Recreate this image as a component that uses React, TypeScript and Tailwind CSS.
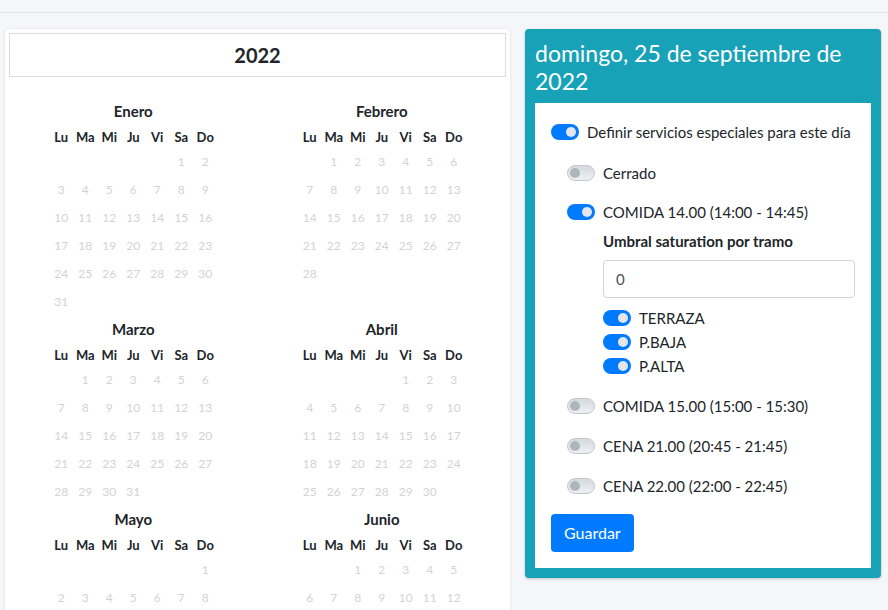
import React from "react"

const MONTHS = [
  "Enero", "Febrero", "Marzo", "Abril", "Mayo", "Junio",
  "Julio", "Agosto", "Septiembre", "Octubre", "Noviembre", "Diciembre",
]
const DAYS = ["Lu", "Ma", "Mi", "Ju", "Vi", "Sa", "Do"]

function monthWeeks(year: number, month: number) {
  const offset = (new Date(year, month, 1).getDay() + 6) % 7
  const total = new Date(year, month + 1, 0).getDate()
  const cells: (number | null)[] = Array(offset).fill(null)
  for (let d = 1; d <= total; d++) cells.push(d)
  while (cells.length % 7) cells.push(null)
  const weeks: (number | null)[][] = []
  for (let i = 0; i < cells.length; i += 7) weeks.push(cells.slice(i, i + 7))
  return weeks
}

function Month({ year, month }: { year: number; month: number }) {
  const weeks = monthWeeks(year, month)
  return (
    <div className="flex flex-col items-center">
      <div className="h-[22px] leading-[22px] mb-[4px] text-[15px] font-bold text-[#212529]">{MONTHS[month]}</div>
      <div className="grid grid-cols-[repeat(7,24px)]">
        {DAYS.map((d) => (
          <div key={d} className="h-[22px] leading-[22px] text-center text-[13px] font-bold text-[#212529]">
            {d}
          </div>
        ))}
        {weeks.flat().map((d, i) => (
          <div key={i} className="h-[28px] leading-[28px] text-center text-[12px] text-[#d3d3d3]">
            {d ?? ""}
          </div>
        ))}
      </div>
    </div>
  )
}

function Switch({ on }: { on: boolean }) {
  return on ? (
    <span className="relative inline-block w-[28px] h-[16px] rounded-full bg-[#007bff] shrink-0">
      <span className="absolute right-[3px] top-[3px] w-[10px] h-[10px] rounded-full bg-[#e3e6ec]" />
    </span>
  ) : (
    <span className="relative inline-block w-[28px] h-[16px] rounded-full border border-[#c4c8cd] bg-gradient-to-b from-[#d6d9dd] to-[#eef0f2] shrink-0">
      <span className="absolute left-[2px] top-[2px] w-[10px] h-[10px] rounded-full bg-[#adb5bd]" />
    </span>
  )
}

function Row({ on, label }: { on: boolean; label: string }) {
  return (
    <div className="flex items-center gap-[8px] h-[24px]">
      <Switch on={on} />
      <span>{label}</span>
    </div>
  )
}

export default function App() {
  return (
    <div className="min-h-screen bg-[#f4f6f9] text-[#212529]" style={{ fontFamily: "Lato, 'Noto Sans', sans-serif" }}>
      <div className="h-[13px] border-b border-[#dee2e6]" />
      <div className="flex items-start gap-[15px] pl-[5px] pt-[16px]">
        <div className="w-[505px] bg-white rounded-[4px] shadow-[0_0_2px_rgba(0,0,0,0.15)] p-[4px] pb-[30px]">
          <div className="h-[44px] border border-[#dcdcdc] flex items-center justify-center text-[20px] font-bold">
            2022
          </div>
          <div className="grid grid-cols-2 gap-y-[2px] pt-[23px]">
            {MONTHS.map((_, m) => (
              <Month key={m} year={2022} month={m} />
            ))}
          </div>
        </div>

        <div className="w-[356px] bg-[#17a2b8] rounded-[4px] shadow-[0_1px_3px_rgba(0,0,0,0.2)] p-[10px]">
          <h2 className="text-white text-[23px] leading-[28px] mb-[8px]">domingo, 25 de septiembre de 2022</h2>
          <div className="bg-white px-[16px] pt-[17px] pb-[16px] text-[15px]">
            <Row on label="Definir servicios especiales para este día" />
            <div className="pl-[16px]">
              <div className="mt-[17px]">
                <Row on={false} label="Cerrado" />
              </div>
              <div className="mt-[15px]">
                <Row on label="COMIDA 14.00 (14:00 - 14:45)" />
              </div>
              <div className="pl-[36px]">
                <div className="mt-[5px] h-[24px] leading-[24px] font-bold">Umbral saturation por tramo</div>
                <div className="mt-[7px] h-[38px] border border-[#ced4da] rounded-[4px] px-[12px] flex items-center text-[#495057]">
                  0
                </div>
                <div className="mt-[8px] flex flex-col">
                  <Row on label="TERRAZA" />
                  <Row on label="P.BAJA" />
                  <Row on label="P.ALTA" />
                </div>
              </div>
              <div className="mt-[16px] flex flex-col gap-[16px]">
                <Row on={false} label="COMIDA 15.00 (15:00 - 15:30)" />
                <Row on={false} label="CENA 21.00 (20:45 - 21:45)" />
                <Row on={false} label="CENA 22.00 (22:00 - 22:45)" />
              </div>
            </div>
            <button className="mt-[16px] h-[38px] px-[13px] rounded-[4px] bg-[#007bff] text-white text-[16px]">
              Guardar
            </button>
          </div>
        </div>
      </div>
    </div>
  )
}
